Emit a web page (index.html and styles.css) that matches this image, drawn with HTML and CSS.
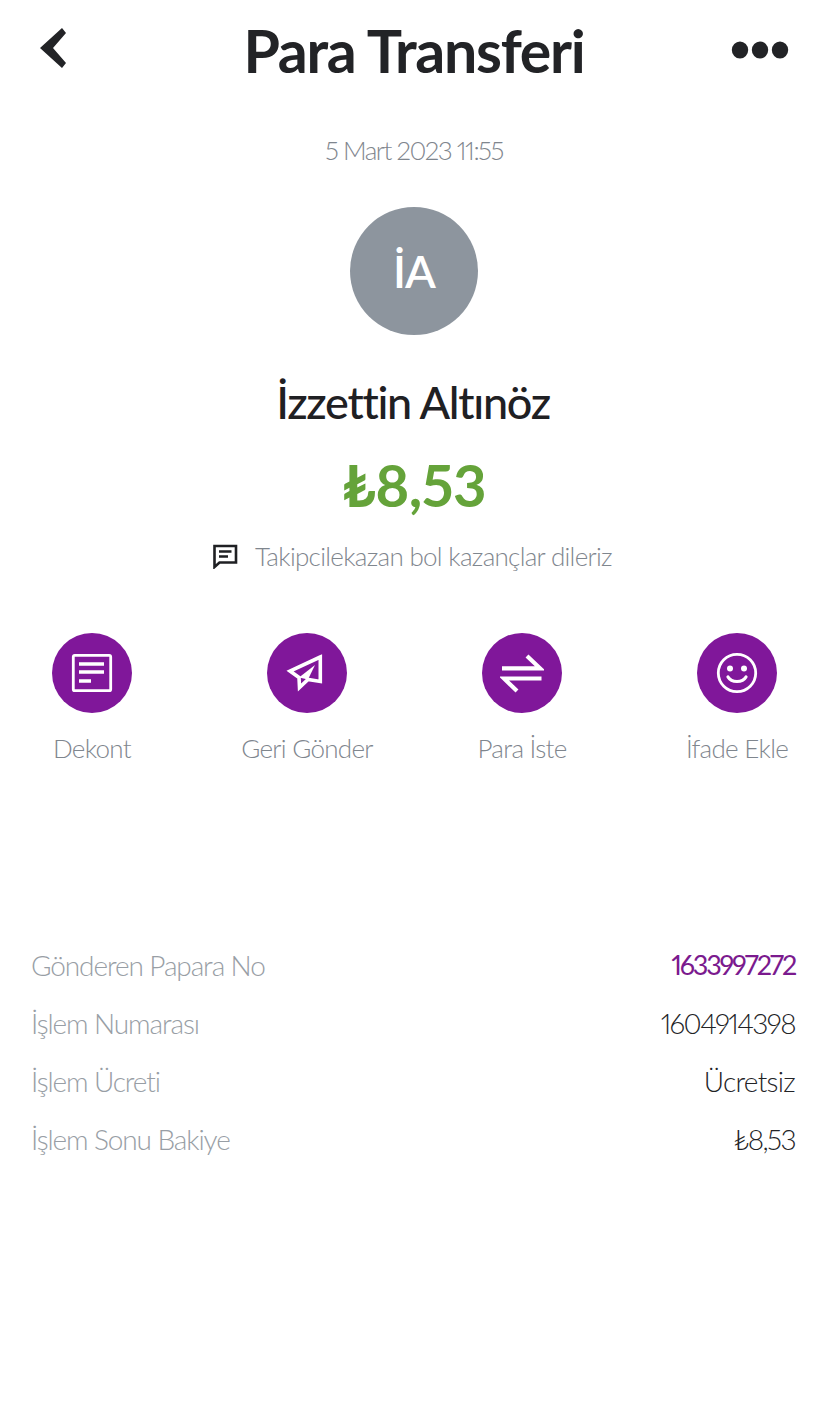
FILE: index.html
```html
<!DOCTYPE html>
<html lang="tr">
<head>
<meta charset="utf-8">
<title>Para Transferi</title>
<link rel="stylesheet" href="styles.css">
</head>
<body>
<main class="page">
  <header class="topbar">
    <svg class="back" width="32" height="40" viewBox="0 0 32 40"><path d="M3 20 L25 0 L29 5 L16 20 L29 35 L25 40 Z" fill="#222326"/></svg>
    <h1 class="title">Para Transferi</h1>
    <svg class="more" width="58" height="20" viewBox="0 0 58 20"><ellipse cx="9" cy="10" rx="8.2" ry="8.6" fill="#222326"/><ellipse cx="29" cy="10" rx="8.2" ry="8.6" fill="#222326"/><ellipse cx="49" cy="10" rx="8.2" ry="8.6" fill="#222326"/></svg>
  </header>
  <section class="summary">
    <p class="date">5 Mart 2023 11:55</p>
    <div class="avatar">İA</div>
    <h2 class="name">İzzettin Altınöz</h2>
    <p class="amount">₺8,53</p>
    <p class="note">
      <svg class="note-icon" width="26" height="26" viewBox="0 0 26 26"><path d="M2.5 3 H24 V19.5 H7.5 L2.5 24 Z" fill="none" stroke="#1f2023" stroke-width="2.6"/><path d="M7 8.5 H19.5 M7 13.5 H16" stroke="#1f2023" stroke-width="2.6" fill="none"/></svg>
      <span>Takipcilekazan bol kazançlar dileriz</span>
    </p>
  </section>
  <nav class="actions">
    <div class="action">
      <span class="action-icon"><svg width="44" height="44" viewBox="0 0 44 44"><rect x="3.3" y="4.3" width="37.4" height="35.4" rx="1.5" fill="none" stroke="#fff" stroke-width="2.8"/><path d="M9 13 H34 M9 21 H34 M9 30 H21" stroke="#fff" stroke-width="3.4" fill="none"/></svg></span>
      <span class="action-label">Dekont</span>
    </div>
    <div class="action">
      <span class="action-icon"><svg width="44" height="44" viewBox="0 0 44 44"><path d="M35.3 6 L5 20 L14 26.5 L14.5 36.5 L23 28.5 L35.3 30.5 Z" fill="none" stroke="#fff" stroke-width="3.6" stroke-linejoin="miter"/><path d="M30 14 L14 26.5 L23 28.5 Z" fill="#fff"/></svg></span>
      <span class="action-label">Geri Gönder</span>
    </div>
    <div class="action">
      <span class="action-icon"><svg width="44" height="44" viewBox="0 0 44 44"><path d="M2 17.3 H40 L27 5 M41.5 27.5 H4 L17 40" fill="none" stroke="#fff" stroke-width="4.2"/></svg></span>
      <span class="action-label">Para İste</span>
    </div>
    <div class="action">
      <span class="action-icon"><svg width="44" height="44" viewBox="0 0 44 44"><circle cx="22" cy="22" r="18.7" fill="none" stroke="#fff" stroke-width="2.8"/><circle cx="15" cy="17.5" r="3" fill="#fff"/><circle cx="29" cy="17.5" r="3" fill="#fff"/><path d="M13 26 C16.5 32 27.5 32 31 26" fill="none" stroke="#fff" stroke-width="3.2" stroke-linecap="round"/></svg></span>
      <span class="action-label">İfade Ekle</span>
    </div>
  </nav>
  <dl class="details">
    <div class="row"><dt>Gönderen Papara No</dt><dd class="accent">1633997272</dd></div>
    <div class="row"><dt>İşlem Numarası</dt><dd class="num">1604914398</dd></div>
    <div class="row"><dt>İşlem Ücreti</dt><dd class="word">Ücretsiz</dd></div>
    <div class="row"><dt>İşlem Sonu Bakiye</dt><dd class="num">₺8,53</dd></div>
  </dl>
</main>
</body>
</html>
```
FILE: styles.css
```css
* { box-sizing: border-box; }
html, body { margin: 0; background: #fff; }
body { font-family: Lato, "Open Sans", "Liberation Sans", sans-serif; color: #222326; font-variant-numeric: proportional-nums; }
.page { width: 828px; height: 1401px; overflow: hidden; }
p, h1, h2, dl, dd { margin: 0; }

.topbar { height: 106px; padding: 28px 39px 0 37px; display: flex; justify-content: space-between; align-items: flex-start; position: relative; }
.back { display: block; }
.more { display: block; margin-top: 12px; }
.title { position: absolute; left: 0; right: 0; top: 15px; text-align: center; font-size: 59px; line-height: 72px; font-weight: 700; letter-spacing: -1.25px; color: #222326; }

.summary { display: flex; flex-direction: column; align-items: center; }
.date { margin-top: 28px; font-size: 26px; line-height: 32px; font-weight: 300; letter-spacing: -1.5px; color: #7f868e; }
.avatar { margin-top: 41px; width: 128px; height: 128px; border-radius: 50%; background: #8d959e; color: #fff; display: flex; align-items: center; justify-content: center; font-size: 45px; font-weight: 600; letter-spacing: -1px; }
.name { margin-top: 38px; padding-right: 2px; font-size: 45px; line-height: 58px; font-weight: 500; letter-spacing: -1.3px; color: #1f2023; }
.amount { margin-top: 19px; font-size: 58px; line-height: 70px; font-weight: 700; letter-spacing: -0.6px; color: #65a33a; }
.note { margin-top: 18px; padding-right: 4px; display: flex; align-items: center; gap: 17px; font-size: 26px; line-height: 36px; font-weight: 300; letter-spacing: -0.7px; color: #7f868e; }
.note-icon { display: block; }

.actions { margin-top: 59px; padding-left: 52px; display: flex; gap: 135px; }
.action { width: 80px; display: flex; flex-direction: column; align-items: center; gap: 19px; }
.action-icon { width: 80px; height: 80px; border-radius: 50%; background: #80179a; display: flex; align-items: center; justify-content: center; }
.action-label { white-space: nowrap; font-size: 26px; line-height: 32px; font-weight: 300; letter-spacing: -0.7px; color: #7f868e; }

.details { margin-top: 181px; padding: 0 33px 0 31px; display: flex; flex-direction: column; gap: 18px; }
.row { display: flex; justify-content: space-between; height: 40px; align-items: center; font-size: 28px; line-height: 40px; font-weight: 300; letter-spacing: -1.1px; }
.row dt { color: #989ea5; }
.row dd { color: #222326; }
.row dd.num { letter-spacing: -1.6px; }
.row dd.word { letter-spacing: -0.7px; }
.row dd.accent { color: #7b1a8e; font-size: 27px; font-weight: 400; letter-spacing: -2.2px; }
```
